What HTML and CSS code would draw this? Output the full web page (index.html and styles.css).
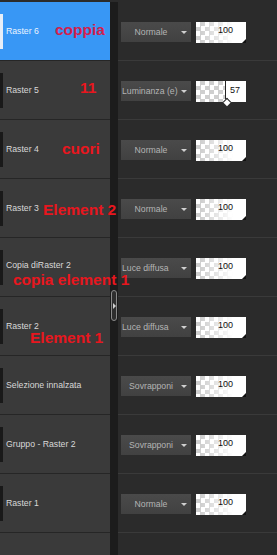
FILE: index.html
```html
<!DOCTYPE html>
<html lang="en">
<head>
    <meta charset="UTF-8">
    <meta name="viewport" content="width=device-width, initial-scale=1.0">
    <title>Livelli</title>
    <link rel="stylesheet" href="styles.css">
</head>
<body>
    <div class="panel">
        <div class="layer selected">
            <div class="name"><span class="thumb"></span>Raster 6<span class="note note-pink" style="left:55px;top:22px">coppia</span></div>
            <div class="split"></div>
            <div class="props">
                <div class="blend">Normale</div>
                <div class="opacity">100</div>
            </div>
        </div>
        <div class="layer">
            <div class="name"><span class="thumb"></span>Raster 5<span class="note" style="left:80px;top:21px">11</span></div>
            <div class="split"></div>
            <div class="props">
                <div class="blend left">Luminanza (e)</div>
                <div class="opacity slider"><span class="fill"></span><span class="value">57</span></div>
            </div>
        </div>
        <div class="layer">
            <div class="name"><span class="thumb"></span>Raster 4<span class="note" style="left:62px;top:23px">cuori</span></div>
            <div class="split"></div>
            <div class="props">
                <div class="blend">Normale</div>
                <div class="opacity">100</div>
            </div>
        </div>
        <div class="layer">
            <div class="name"><span class="thumb"></span>Raster 3<span class="note" style="left:43px;top:25px">Element 2</span></div>
            <div class="split"></div>
            <div class="props">
                <div class="blend">Normale</div>
                <div class="opacity">100</div>
            </div>
        </div>
        <div class="layer">
            <div class="name raised"><span class="thumb"></span>Copia diRaster 2<span class="note" style="left:13px;top:36px">copia element 1</span></div>
            <div class="split"></div>
            <div class="props">
                <div class="blend left">Luce diffusa</div>
                <div class="opacity">100</div>
            </div>
        </div>
        <div class="layer">
            <div class="name"><span class="thumb"></span>Raster 2<span class="note" style="left:30px;top:35px">Element 1</span></div>
            <div class="split"></div>
            <div class="props">
                <div class="blend left">Luce diffusa</div>
                <div class="opacity">100</div>
            </div>
        </div>
        <div class="layer">
            <div class="name"><span class="thumb"></span>Selezione innalzata</div>
            <div class="split"></div>
            <div class="props">
                <div class="blend">Sovrapponi</div>
                <div class="opacity">100</div>
            </div>
        </div>
        <div class="layer">
            <div class="name"><span class="thumb"></span>Gruppo - Raster 2</div>
            <div class="split"></div>
            <div class="props">
                <div class="blend">Sovrapponi</div>
                <div class="opacity">100</div>
            </div>
        </div>
        <div class="layer">
            <div class="name"><span class="thumb"></span>Raster 1</div>
            <div class="split"></div>
            <div class="props">
                <div class="blend">Normale</div>
                <div class="opacity">100</div>
            </div>
        </div>
        <div class="layer rest">
            <div class="name"></div>
            <div class="split"></div>
            <div class="props"></div>
        </div>
        <div class="handle"></div>
    </div>
</body>
</html>
```

FILE: styles.css
```css
body {
    margin: 0;
    background-color: #2b2b2b;
    font-family: "Liberation Sans", Arial, sans-serif;
}
.panel {
    position: relative;
    width: 277px;
    height: 555px;
    overflow: hidden;
    padding-top: 2px;
    box-sizing: border-box;
    display: flex;
    flex-direction: column;
    background-color: #2b2b2b;
}
.layer {
    height: 59px;
    flex-shrink: 0;
    display: grid;
    grid-template-columns: 110px 8px 1fr;
}
.layer.rest {
    flex: 1;
}
.name {
    position: relative;
    display: flex;
    align-items: center;
    background-color: #3a3a3a;
    border-bottom: 1px solid #262626;
    color: #d8d8d8;
    font-size: 8.7px;
    line-height: 1;
    z-index: 2;
}
.name.raised {
    padding-bottom: 3px;
}
.rest .name {
    border-bottom: none;
}
.selected .name {
    background-color: #3897f5;
    color: #eaf3ff;
}
.thumb {
    width: 3px;
    height: 35px;
    margin-right: 3px;
    background-color: #191919;
}
.raised .thumb {
    margin-top: 3px;
}
.selected .thumb {
    background-color: #e6eef8;
}
.note {
    position: absolute;
    white-space: nowrap;
    font-size: 15.5px;
    line-height: 12px;
    font-weight: bold;
    color: #e8161e;
}
.note-pink {
    color: #d3204d;
}
.split {
    background-color: #1c1c1c;
}
.props {
    display: flex;
    align-items: center;
    gap: 5px;
    padding-left: 3px;
    padding-top: 2px;
    border-bottom: 1px solid #3a3a3a;
}
.rest .props {
    border-bottom: none;
}
.blend {
    position: relative;
    width: 70px;
    height: 20px;
    box-sizing: border-box;
    padding-right: 10px;
    background: linear-gradient(#4a4a4a, #414141);
    color: #b4b4b4;
    font-size: 8.7px;
    line-height: 20px;
    text-align: center;
}
.blend.left {
    text-align: left;
    padding-left: 1px;
}
.blend::after {
    content: "";
    position: absolute;
    right: 4px;
    top: 9px;
    border-left: 3px solid transparent;
    border-right: 3px solid transparent;
    border-top: 3px solid #d0d0d0;
}
.opacity {
    position: relative;
    width: 50px;
    height: 21px;
    box-sizing: border-box;
    padding: 3px 13px 0 0;
    text-align: right;
    font-size: 9px;
    color: #111;
    background:
        linear-gradient(to right, rgba(255, 255, 255, 0) 10%, #fff 75%),
        conic-gradient(#cfcfcf 25%, #fff 0 50%, #cfcfcf 0 75%, #fff 0) 0 0 / 9px 9px;
}
.opacity::after {
    content: "";
    position: absolute;
    right: 0;
    bottom: 0;
    border-left: 4px solid transparent;
    border-bottom: 4px solid #111;
}
.opacity.slider {
    display: flex;
    padding: 0;
    background: #fff;
}
.opacity.slider::after {
    display: none;
}
.fill {
    position: relative;
    width: 29px;
    border-right: 1px solid #222;
    background: conic-gradient(#cfcfcf 25%, #fff 0 50%, #cfcfcf 0 75%, #fff 0) 0 0 / 9px 9px;
}
.fill::after {
    content: "";
    position: absolute;
    right: -5px;
    bottom: 0;
    width: 6px;
    height: 6px;
    box-sizing: border-box;
    border-left: 1px solid #222;
    border-top: 1px solid #222;
    background-color: #fff;
    transform: translateY(3px) rotate(45deg);
}
.value {
    flex: 1;
    padding: 4px 6px 0 0;
    text-align: right;
}
.handle {
    position: absolute;
    left: 111px;
    top: 290px;
    width: 6px;
    height: 31px;
    box-sizing: border-box;
    border: 1px solid #8a8a8a;
    border-radius: 3px;
    background-color: #2e2e2e;
    z-index: 3;
}
.handle::after {
    content: "";
    position: absolute;
    left: 1px;
    top: 12px;
    border-top: 3px solid transparent;
    border-bottom: 3px solid transparent;
    border-left: 3px solid #d0d0d0;
}
```
